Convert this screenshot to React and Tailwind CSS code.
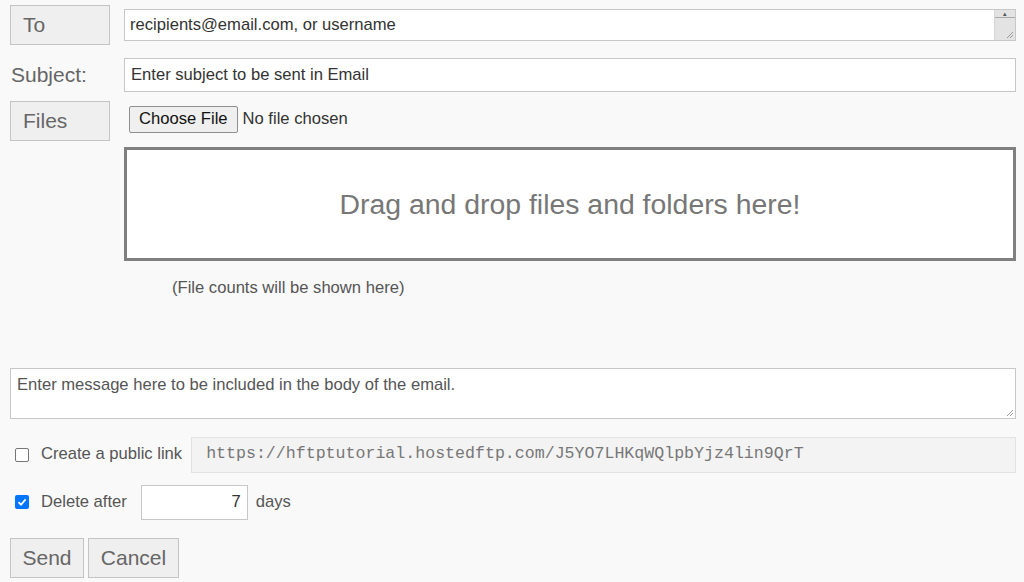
import React from 'react';

function LabelButton({ children, className = '' }) {
  return (
    <button
      className={`h-[40px] w-[100px] border border-[#c4c4c4] bg-[#efefef] text-left pl-[12px] text-[21px] text-[#666] ${className}`}
    >
      {children}
    </button>
  );
}

function App() {
  return (
    <div className="w-full h-[582px] overflow-hidden bg-[#f9f9f9] text-[16.6px] text-[#333] font-['Liberation_Sans',Arial,sans-serif]">
      <div className="pl-[10px] pr-[8px] pt-[5px]">
        {/* To */}
        <div className="flex items-start">
          <LabelButton>To</LabelButton>
          <div className="ml-[14px] mt-[4px] flex-1 h-[32px] flex border border-[#c7c7c7] bg-white">
            <div className="flex-1 pl-[5px] pt-[5px] text-[16.6px] text-[#333] leading-[19px]">
              recipients@email.com, or username
            </div>
            <div className="w-[21px] bg-[#e3e3e3] border-l border-[#d6d6d6] relative">
              <div className="h-[8px] border-b border-[#aaa] flex justify-center">
                <span className="text-[7px] leading-[8px] text-[#555]">▴</span>
              </div>
              <svg className="absolute right-[1px] bottom-[1px]" width="10" height="10" viewBox="0 0 10 10">
                <path d="M9 3 L3 9 M9 6 L6 9" stroke="#999" strokeWidth="1" />
              </svg>
            </div>
          </div>
        </div>

        {/* Subject */}
        <div className="flex items-center mt-[13px]">
          <div className="w-[100px] pl-[1px] text-[21px] text-[#666]">Subject:</div>
          <div className="ml-[14px] flex-1 h-[34px] border border-[#c7c7c7] bg-white pl-[6px] flex items-center text-[16.6px] text-[#333]">
            Enter subject to be sent in Email
          </div>
        </div>

        {/* Files */}
        <div className="flex items-start mt-[9px]">
          <LabelButton>Files</LabelButton>
          <div className="ml-[14px] flex-1">
            <div className="flex items-center ml-[5px] mt-[5px]">
              <button className="h-[27px] px-[9px] border border-[#8f8f8f] rounded-[2px] bg-[#efefef] text-[16.6px] text-[#111]">
                Choose File
              </button>
              <span className="ml-[5px] text-[16.6px] text-[#333]">No file chosen</span>
            </div>
            <div className="mt-[14px] h-[114px] border-[3px] border-[#808080] bg-white flex items-center justify-center text-[28.4px] text-[#777]">
              Drag and drop files and folders here!
            </div>
            <div className="ml-[48px] mt-[15px] text-[16.6px] text-[#555]">
              (File counts will be shown here)
            </div>
          </div>
        </div>

        {/* Message */}
        <div className="mt-[67px] h-[51px] border border-[#c7c7c7] bg-white pl-[6px] pt-[4px] text-[16.6px] text-[#555] relative">
          Enter message here to be included in the body of the email.
          <svg className="absolute right-[1px] bottom-[1px]" width="10" height="10" viewBox="0 0 10 10">
            <path d="M9 3 L3 9 M9 6 L6 9" stroke="#999" strokeWidth="1" />
          </svg>
        </div>

        {/* Public link */}
        <div className="flex items-center mt-[18px]">
          <span className="ml-[5px] w-[14px] h-[14px] rounded-[2px] border border-[#767676] bg-white" />
          <span className="ml-[12px] text-[16.6px] text-[#555]">Create a public link</span>
          <div className="ml-[9px] flex-1 h-[36px] border border-[#e2e2e2] bg-[#f3f3f3] pl-[14px] flex items-center font-['Liberation_Mono','Courier_New',monospace] text-[16.6px] text-[#777]">
            https://hftptutorial.hostedftp.com/J5YO7LHKqWQlpbYjz4lin9QrT
          </div>
        </div>

        {/* Delete after */}
        <div className="flex items-center mt-[12px]">
          <span className="ml-[5px] w-[14px] h-[14px] rounded-[2px] bg-[#0075ff] flex items-center justify-center">
            <svg width="10" height="10" viewBox="0 0 10 10">
              <path d="M1.5 5.2 L4 7.6 L8.6 2.4" stroke="white" strokeWidth="1.8" fill="none" />
            </svg>
          </span>
          <span className="ml-[12px] text-[16.6px] text-[#555]">Delete after</span>
          <div className="ml-[14px] w-[107px] h-[35px] border border-[#c7c7c7] bg-white flex items-center justify-end pr-[6px] text-[16.6px] text-[#333]">
            7
          </div>
          <span className="ml-[8px] text-[16.6px] text-[#555]">days</span>
        </div>

        {/* Buttons */}
        <div className="flex mt-[18px] gap-[4px]">
          <button className="h-[40px] w-[74px] border border-[#c4c4c4] bg-[#efefef] text-[21px] text-[#666]">Send</button>
          <button className="h-[40px] w-[91px] border border-[#c4c4c4] bg-[#efefef] text-[21px] text-[#666]">Cancel</button>
        </div>
      </div>
    </div>
  );
}

export default App;
